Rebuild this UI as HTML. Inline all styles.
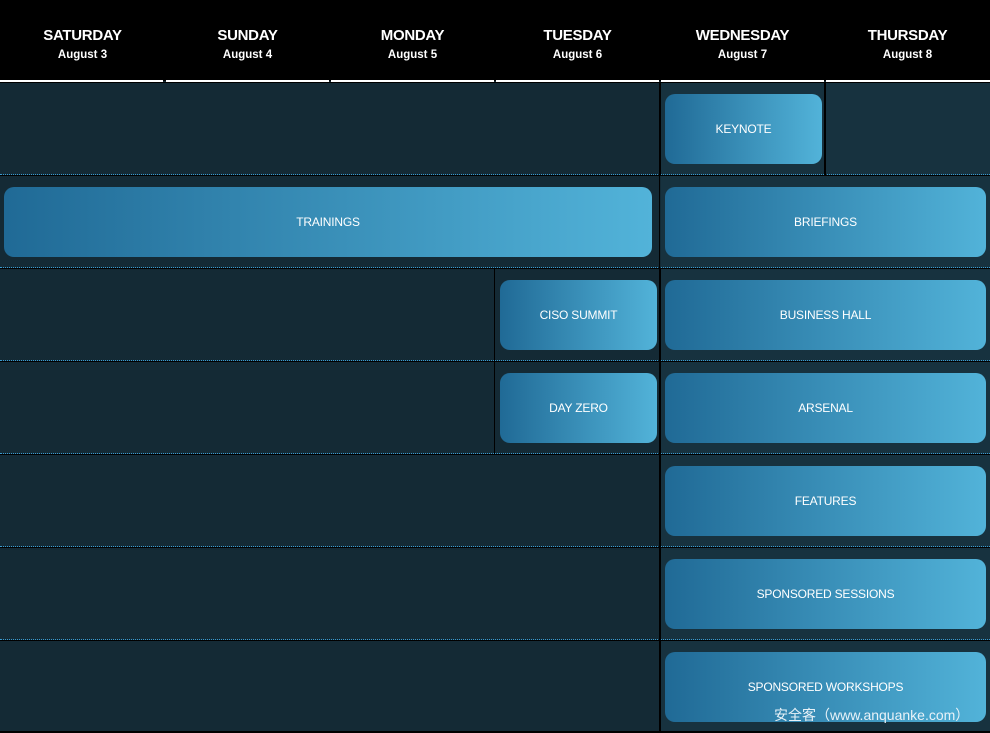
<!DOCTYPE html>
<html><head><style>
body{margin:0;width:990px;height:733px;background:#142a35;position:relative;overflow:hidden;font-family:"Liberation Sans","DejaVu Sans",sans-serif}
.hdr{position:absolute;left:0;top:0;width:990px;height:81px;background:#000}
.day{position:absolute;top:27px;width:165px;text-align:center;color:#fff}
.day b{display:block;font-size:15px;font-weight:bold;letter-spacing:-0.3px;line-height:17px}
.day i{display:block;font-style:normal;font-weight:bold;font-size:11.5px;margin-top:5px;line-height:13px}
.wl{position:absolute;top:80px;height:2px;background:#fff}
.sep{position:absolute;left:0;width:990px;height:1px;border-top:1px dotted #3a9bd0}
.blk{position:absolute;left:0;width:990px;height:1px;background:#000}
.vl{position:absolute;width:2px;background:#000}
.box{position:absolute;height:70px;border-radius:10px;background:linear-gradient(to right,#206a96,#52b3d9);color:#fff;font-size:12px;letter-spacing:-0.2px;display:flex;align-items:center;justify-content:center}
.wm{position:absolute;left:774px;top:705px;color:#e8f2f8;font-size:14px;font-family:"Liberation Sans","Noto Sans CJK SC",sans-serif}
</style></head><body>
<div class="hdr"></div>
<div class="day" style="left:0"><b>SATURDAY</b><i>August 3</i></div>
<div class="day" style="left:165px"><b>SUNDAY</b><i>August 4</i></div>
<div class="day" style="left:330px"><b>MONDAY</b><i>August 5</i></div>
<div class="day" style="left:495px"><b>TUESDAY</b><i>August 6</i></div>
<div class="day" style="left:660px"><b>WEDNESDAY</b><i>August 7</i></div>
<div class="day" style="left:825px"><b>THURSDAY</b><i>August 8</i></div>
<div class="wl" style="left:0;width:163px"></div>
<div class="wl" style="left:166px;width:163px"></div>
<div class="wl" style="left:331px;width:163px"></div>
<div class="wl" style="left:496px;width:163px"></div>
<div class="wl" style="left:661px;width:163px"></div>
<div class="wl" style="left:826px;width:164px"></div>
<div class="blk" style="top:82px"></div>
<div style="position:absolute;left:661px;top:83px;width:329px;height:650px;background:#17323f"></div>
<div class="sep" style="top:174px"></div><div class="blk" style="top:175px"></div>
<div class="sep" style="top:267px"></div><div class="blk" style="top:268px"></div>
<div class="sep" style="top:360px"></div><div class="blk" style="top:361px"></div>
<div class="sep" style="top:453px"></div><div class="blk" style="top:454px"></div>
<div class="sep" style="top:546px"></div><div class="blk" style="top:547px"></div>
<div class="sep" style="top:639px"></div><div class="blk" style="top:640px"></div>
<div class="blk" style="top:731px;height:2px"></div>
<div class="vl" style="left:659px;top:82px;height:93px"></div>
<div class="vl" style="left:659px;top:269px;height:464px"></div>
<div class="vl" style="left:659px;top:176px;height:92px;width:1px"></div>
<div class="vl" style="left:824px;top:82px;height:93px"></div>
<div class="vl" style="left:494px;top:269px;height:185px;width:1px"></div>
<div class="box" style="left:665px;top:94px;width:157px">KEYNOTE</div>
<div class="box" style="left:4px;top:187px;width:648px">TRAININGS</div>
<div class="box" style="left:665px;top:187px;width:321px">BRIEFINGS</div>
<div class="box" style="left:500px;top:280px;width:157px">CISO SUMMIT</div>
<div class="box" style="left:665px;top:280px;width:321px">BUSINESS HALL</div>
<div class="box" style="left:500px;top:373px;width:157px">DAY ZERO</div>
<div class="box" style="left:665px;top:373px;width:321px">ARSENAL</div>
<div class="box" style="left:665px;top:466px;width:321px">FEATURES</div>
<div class="box" style="left:665px;top:559px;width:321px">SPONSORED SESSIONS</div>
<div class="box" style="left:665px;top:652px;width:321px">SPONSORED WORKSHOPS</div>
<div class="wm">安全客（www.anquanke.com）</div>
</body></html>
